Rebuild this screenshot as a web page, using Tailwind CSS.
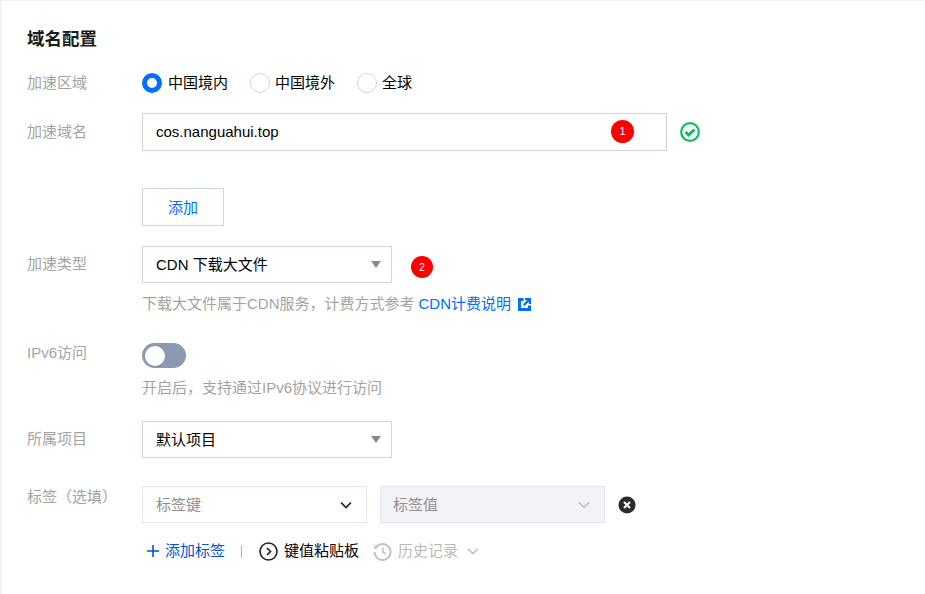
<!DOCTYPE html>
<html lang="zh-CN">
<head>
  <meta charset="UTF-8" />
  <title>域名配置</title>
  <script src="https://cdn.jsdelivr.net/npm/@tailwindcss/browser@4"></script>
</head>
<body class="bg-[#f2f3f5] h-[594px] overflow-hidden font-['Liberation_Sans','Noto_Sans_CJK_SC',sans-serif] text-[15px] text-black">
  <div class="ml-[2px] mt-[1px] h-[593px] bg-white pl-[25px] pt-[27px]">

    <!-- Heading -->
    <h2 class="h-[22px] leading-[22px] text-[17.5px] font-bold text-[#1c1c1c]">域名配置</h2>

    <!-- Region -->
    <div class="mt-[22px] flex h-[22px] items-center">
      <div class="w-[115px] text-[#a3a3a3]">加速区域</div>
      <div class="flex items-center">
        <span class="h-5 w-5 rounded-full border-[5px] border-[#006eff] bg-white"></span>
        <span class="ml-[6px] whitespace-nowrap">中国境内</span>
        <span class="ml-[22px] h-5 w-5 rounded-full border border-[#d0d5dd] bg-white"></span>
        <span class="ml-[5px] whitespace-nowrap">中国境外</span>
        <span class="ml-[22px] h-5 w-5 rounded-full border border-[#d0d5dd] bg-white"></span>
        <span class="ml-[5px] whitespace-nowrap">全球</span>
      </div>
    </div>

    <!-- Domain -->
    <div class="mt-[19px] flex">
      <div class="w-[115px] pt-[9px] leading-[20px] text-[#a3a3a3]">加速域名</div>
      <div>
        <div class="flex items-center">
          <div class="relative flex h-[38px] w-[525px] items-center border border-[#cfd5de] pl-[13px]">
            cos.nanguahui.top
            <span class="absolute left-[468px] top-[6px] flex h-[23px] w-[23px] items-center justify-center rounded-full bg-[#ff0000] text-[11px] text-white">1</span>
          </div>
          <svg class="ml-[13px]" width="20" height="20" viewBox="0 0 20 20" fill="none">
            <circle cx="10" cy="10" r="8.8" stroke="#0abf5b" stroke-width="2.2" />
            <path d="M5.6 10l3.1 3.1 5.7-5.7" stroke="#0abf5b" stroke-width="2.8" />
          </svg>
        </div>
        <button class="mt-[37px] block h-[38px] w-[82px] border border-[#cfd5de] bg-white pt-[2px] text-[#006eff]">添加</button>
      </div>
    </div>

    <!-- Type -->
    <div class="mt-[20px] flex">
      <div class="w-[115px] pt-[8px] leading-[20px] text-[#a3a3a3]">加速类型</div>
      <div>
        <div class="flex items-start">
          <div class="flex h-[37px] w-[250px] items-center justify-between border border-[#cfd5de] pl-[13px] pr-[10px]">
            <span class="pt-[1px]">CDN 下载大文件</span>
            <span class="h-0 w-0 border-x-[5.5px] border-t-[7px] border-x-transparent border-t-[#8a8a8a]"></span>
          </div>
          <span class="ml-[19px] mt-[10px] flex h-[22px] w-[22px] items-center justify-center rounded-full bg-[#ff0000] text-[10px] text-white">2</span>
        </div>
        <div class="mt-[11px] flex h-[20px] items-center text-[#a3a3a3]">
          下载大文件属于CDN服务，计费方式参考
          <span class="ml-[4px] text-[#006eff]">CDN计费说明</span>
          <svg class="ml-[7px]" width="13" height="13" viewBox="0 0 13 13" fill="none">
            <path d="M5.5 1.5H1.5v10h10V7.5" stroke="#006eff" stroke-width="3" />
            <path d="M7 0h6v6h-2.2V3.8L6.6 8 5 6.4l4.2-4.2H7z" fill="#006eff" />
          </svg>
        </div>
      </div>
    </div>

    <!-- IPv6 -->
    <div class="mt-[29px] flex">
      <div class="w-[115px] leading-[20px] text-[#a3a3a3]">IPv6访问</div>
      <div>
        <div class="flex h-[25px] w-[44px] items-center rounded-full bg-[#8a9ab0] pl-[3px]">
          <span class="h-5 w-5 rounded-full bg-white"></span>
        </div>
        <div class="mt-[10px] h-[20px] leading-[20px] text-[#a3a3a3]">开启后，支持通过IPv6协议进行访问</div>
      </div>
    </div>

    <!-- Project -->
    <div class="mt-[23px] flex">
      <div class="w-[115px] pt-[8px] leading-[20px] text-[#a3a3a3]">所属项目</div>
      <div class="flex h-[37px] w-[250px] items-center justify-between border border-[#cfd5de] pl-[13px] pr-[10px]">
        <span class="pt-[1px]">默认项目</span>
        <span class="h-0 w-0 border-x-[5.5px] border-t-[7px] border-x-transparent border-t-[#8a8a8a]"></span>
      </div>
    </div>

    <!-- Tags -->
    <div class="mt-[28px] flex">
      <div class="w-[115px] pt-[1px] leading-[20px] text-[#a3a3a3]">标签（选填）</div>
      <div>
        <div class="flex items-center">
          <div class="flex h-[37px] w-[225px] items-center justify-between border border-[#e3e6ee] pl-[13px] pr-[14px] text-[#8f8f8f]">
            <span class="pt-[1px]">标签键</span>
            <svg width="12" height="8" viewBox="0 0 12 8" fill="none"><path d="M1 1.5l5 5 5-5" stroke="#222" stroke-width="1.7" /></svg>
          </div>
          <div class="ml-[13px] flex h-[37px] w-[225px] items-center justify-between border border-[#e3e6ee] bg-[#f2f3f7] pl-[12px] pr-[14px] text-[#8f8f8f]">
            <span class="pt-[1px]">标签值</span>
            <svg width="12" height="8" viewBox="0 0 12 8" fill="none"><path d="M1 1.5l5 5 5-5" stroke="#b9bcc2" stroke-width="1.5" /></svg>
          </div>
          <svg class="ml-[13px]" width="18" height="18" viewBox="0 0 18 18">
            <circle cx="9" cy="9" r="8.5" fill="#2b2b2b" />
            <path d="M6 6l6 6M12 6l-6 6" stroke="#fff" stroke-width="2" />
          </svg>
        </div>
        <div class="mt-[18px] flex h-[20px] items-center">
          <svg class="ml-[5px]" width="12" height="12" viewBox="0 0 12 12"><path d="M6 0v12M0 6h12" stroke="#0052d9" stroke-width="1.6" /></svg>
          <span class="ml-[6px] whitespace-nowrap text-[#0052d9]">添加标签</span>
          <span class="ml-[16px] h-[13px] w-px bg-[#b5b5b5]"></span>
          <svg class="ml-[17px]" width="19" height="19" viewBox="0 0 19 19" fill="none">
            <circle cx="9.5" cy="9.5" r="8.5" stroke="#222" stroke-width="1.6" />
            <path d="M8 6l3.5 3.5L8 13" stroke="#222" stroke-width="1.7" />
          </svg>
          <span class="ml-[6px] whitespace-nowrap">键值粘贴板</span>
          <svg class="ml-[14px]" width="19" height="19" viewBox="0 0 19 19" fill="none">
            <path d="M3.2 5.2A8 8 0 1 1 1.6 10" stroke="#c4c4c4" stroke-width="2" />
            <path d="M1 2.5v4.2h4.2z" fill="#c4c4c4" />
            <path d="M9.8 5.5v4.6l3 2" stroke="#c4c4c4" stroke-width="1.8" />
          </svg>
          <span class="ml-[6px] whitespace-nowrap text-[#b9b9b9]">历史记录</span>
          <svg class="ml-[9px]" width="12" height="7" viewBox="0 0 12 7" fill="none"><path d="M1 1l5 4.5L11 1" stroke="#b9bcc2" stroke-width="1.5" /></svg>
        </div>
      </div>
    </div>

  </div>
</body>
</html>
